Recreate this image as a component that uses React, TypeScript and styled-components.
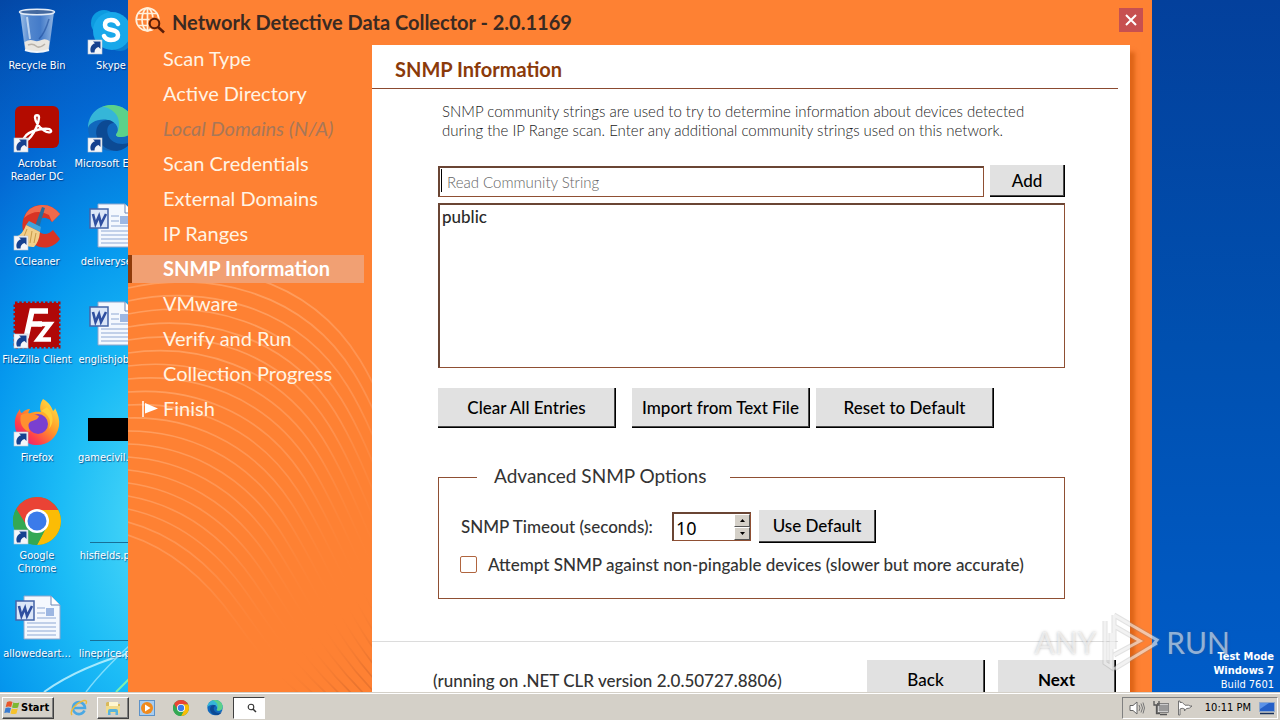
import React from "react";
import styled, { createGlobalStyle, css } from "styled-components";

const GlobalStyle = createGlobalStyle`
  *, *::before, *::after { box-sizing: border-box; }
  html, body { margin: 0; padding: 0; }
  body { font-family: Lato, "Liberation Sans", sans-serif; }
  button, input, select { font-family: inherit; }
`;

const tahoma = `"DejaVu Sans Condensed", "DejaVu Sans", sans-serif`;

const Screen = styled.div`
  display: flex;
  flex-direction: column;
  height: 100vh;
  overflow: hidden;
`;

const Desktop = styled.main`
  position: relative;
  flex: 1;
  min-height: 0;
  overflow: hidden;
  background:
    radial-gradient(ellipse 33% 90% at 14% 76%, #58e0f8 0%, #1cbcf6 28%, #0598ee 48%, rgba(3, 108, 216, 0.9) 70%, rgba(3, 80, 180, 0) 100%),
    linear-gradient(#03409c 0%, #0050b0 50%, #005cc8 100%);
`;

const Rays = styled.svg`
  position: absolute;
  left: 0;
  bottom: 0;
`;

const IconGrid = styled.div`
  position: absolute;
  top: 0;
  left: 0;
  display: grid;
  grid-template-rows: repeat(7, 98px);
  grid-auto-flow: column;
  grid-auto-columns: 74px;
`;

const Shortcut = styled.a`
  display: flex;
  flex-direction: column;
  align-items: center;
  gap: 4px;
  padding-top: 7px;
  color: #fff;
  font: 11px/13px ${tahoma};
  text-align: center;
  text-decoration: none;
  text-shadow: 1px 1px 1px rgba(0, 20, 80, 0.6);
`;

const ShortcutLabel = styled.span<{ $wrap?: boolean }>`
  width: 72px;
  display: flex;
  justify-content: center;
  white-space: ${(p) => (p.$wrap ? "pre-line" : "nowrap")};
`;

const BuildInfo = styled.div`
  position: absolute;
  right: 6px;
  bottom: 0;
  color: #fff;
  font: 11px/14px ${tahoma};
  text-align: right;
`;

const BuildLine = styled.div<{ $bold?: boolean }>`
  font-weight: ${(p) => (p.$bold ? 700 : 400)};
`;

const Watermark = styled.div`
  position: absolute;
  right: 50px;
  bottom: 19px;
  display: flex;
  align-items: center;
  gap: 5px;
  color: rgba(255, 255, 255, 0.55);
  font: 30px/60px Lato, sans-serif;
  text-shadow: 0 0 3px rgba(90, 90, 90, 0.4);
  pointer-events: none;
`;

const Window = styled.section`
  position: absolute;
  top: 0;
  bottom: 0;
  left: 10%;
  right: 10%;
  display: flex;
  flex-direction: column;
  background: #fe8133;
`;

const TitleBar = styled.header`
  display: flex;
  align-items: center;
  gap: 7px;
  height: 45px;
  padding: 0 9px 5px 7px;
`;

const Title = styled.h1`
  flex: 1;
  margin: 0;
  padding-top: 3px;
  color: #3a2a22;
  font-size: 20px;
  line-height: 24px;
`;

const CloseButton = styled.button`
  display: flex;
  align-items: center;
  justify-content: center;
  width: 24px;
  height: 24px;
  padding: 0;
  border: 0;
  background: #c75050;
`;

const WindowBody = styled.div`
  display: grid;
  grid-template-columns: 244px 1fr;
  flex: 1;
  min-height: 0;
  padding-right: 22px;
`;

const Nav = styled.nav`
  position: relative;
  display: flex;
  flex-direction: column;
  gap: 7px;
  padding-right: 8px;
`;

const Arcs = styled.svg`
  position: absolute;
  left: 0;
  top: 205px;
  pointer-events: none;
`;

const Step = styled.a<{ $state?: "active" | "disabled" }>`
  position: relative;
  display: flex;
  align-items: center;
  height: 28px;
  padding: 0 0 2px 31px;
  border-left: 4px solid transparent;
  color: #fff4e4;
  font-size: 20px;
  line-height: 26px;
  text-decoration: none;
  white-space: nowrap;
  ${(p) =>
    p.$state === "active" &&
    css`
      border-left-color: #8f3b0a;
      background: #f1a073;
      color: #fff;
      font-weight: 700;
    `}
  ${(p) =>
    p.$state === "disabled" &&
    css`
      color: #a87758;
      font-style: italic;
    `}
`;

const Flag = styled.svg`
  position: absolute;
  left: 10px;
  top: 6px;
`;

const Panel = styled.div`
  display: flex;
  flex-direction: column;
  min-height: 0;
  background: #fff;
  box-shadow: 6px 6px 4px -1px rgba(196, 76, 0, 0.55);
`;

const PanelTitle = styled.h2`
  height: 44px;
  margin: 0 12px 0 0;
  padding: 12px 0 0 23px;
  border-bottom: 1px solid #8b4a30;
  color: #8b3a0a;
  font-size: 20px;
  line-height: 24px;
`;

const PanelContent = styled.div`
  flex: 1;
  min-height: 0;
  padding: 13px 65px 0 66px;
`;

const Description = styled.p`
  margin: 0 0 25px;
  padding-left: 4px;
  color: #222;
  font-size: 15px;
  font-weight: 300;
  line-height: 19px;
`;

const AddRow = styled.form`
  display: flex;
  gap: 6px;
  height: 32px;
  margin-bottom: 6px;
`;

const fieldBorder = css`
  border: 1px solid #8f4f33;
  border-top: 2px solid #6a4534;
  border-left: 2px solid #6a4534;
  border-radius: 0;
  background: #fff;
  outline: none;
`;

const CommunityInput = styled.input`
  ${fieldBorder}
  flex: 1;
  min-width: 0;
  margin-top: 1px;
  padding: 0 7px;
  font-size: 15px;
  font-weight: 300;
  &::placeholder { color: #666; opacity: 1; }
`;

const InputWrap = styled.div`
  position: relative;
  display: flex;
  flex: 1;
`;

const Caret = styled.span`
  position: absolute;
  left: 3px;
  top: 4px;
  width: 1px;
  height: 23px;
  background: #000;
`;

const ListBox = styled.select`
  ${fieldBorder}
  display: block;
  width: 100%;
  height: 165px;
  padding: 0;
  color: #2a2a2a;
  font-size: 17px;
  overflow: hidden;
`;

const ListOption = styled.option`
  min-height: 24px;
  padding: 1px 2px;
  font-size: 17px;
  font-weight: 500;
  line-height: 20px;
`;

const Button = styled.button<{ $width: number; $height: number; $bold?: boolean }>`
  flex: none;
  width: ${(p) => p.$width}px;
  height: ${(p) => p.$height}px;
  padding: 0;
  border: 0 solid #000;
  border-width: 0 1px 1px 0;
  box-shadow: inset -1px -1px 0 #4a4a4a;
  background: #e1e1e1;
  color: #000;
  font-size: 17px;
  font-weight: ${(p) => (p.$bold ? 700 : 500)};
  line-height: 20px;
  white-space: nowrap;
`;

const ButtonRow = styled.div`
  display: flex;
  gap: 6px;
  margin: 20px 0 37px;
  & > :first-child { margin-right: 10px; }
`;

const Options = styled.fieldset`
  margin: 0;
  padding: 21px 21px 23px;
  border: 1px solid #8f4f33;
`;

const Legend = styled.legend`
  margin-left: 17px;
  padding: 0 24px 2px 17px;
  color: #333;
  font-size: 19px;
  line-height: 22px;
`;

const OptionRow = styled.div`
  display: flex;
  align-items: center;
  gap: 8px;
  height: 33px;
  margin-bottom: 11px;
  color: #333;
  font-size: 17px;
  font-weight: 500;
`;

const TimeoutLabel = styled.label`
  width: 204px;
  padding-left: 1px;
  white-space: nowrap;
`;

const Spinner = styled.div`
  ${fieldBorder}
  display: flex;
  width: 79px;
  height: 29px;
`;

const SpinnerInput = styled.input`
  flex: 1;
  min-width: 0;
  padding: 2px 0 0 2px;
  border: 0;
  outline: none;
  background: transparent;
  font: 18px/22px ${`"Noto Sans", sans-serif`};
  appearance: textfield;
  &::-webkit-inner-spin-button { display: none; }
`;

const SpinnerButtons = styled.div`
  display: flex;
  flex-direction: column;
  width: 16px;
`;

const SpinnerButton = styled.button`
  display: flex;
  align-items: center;
  justify-content: center;
  flex: 1;
  padding: 0;
  border: 1px solid;
  border-color: #fff #555 #555 #fff;
  background: #d4d0c8;
`;

const CheckLabel = styled.label`
  display: flex;
  align-items: center;
  gap: 11px;
  height: 20px;
  margin-bottom: 1px;
  color: #333;
  font-size: 17px;
  font-weight: 500;
  white-space: nowrap;
`;

const CheckBox = styled.input.attrs({ type: "checkbox" })`
  appearance: none;
  width: 17px;
  height: 17px;
  margin: 0;
  border: 1px solid #b0653f;
  border-radius: 2px;
  background: #fff;
`;

const PanelFooter = styled.footer`
  display: flex;
  align-items: flex-start;
  gap: 13px;
  height: 51px;
  margin-right: 12px;
  padding: 18px 2px 0 61px;
  border-top: 1px solid #dcdcdc;
  overflow: hidden;
`;

const RuntimeNote = styled.span`
  flex: 1;
  color: #333;
  font-size: 17px;
  font-weight: 500;
  line-height: 42px;
  white-space: nowrap;
`;

const Taskbar = styled.footer`
  display: flex;
  align-items: center;
  height: 28px;
  padding: 2px 2px 0;
  border-top: 1px solid #d4d0c8;
  box-shadow: inset 0 1px 0 #fff;
  background: #d4d0c8;
`;

const StartButton = styled.button`
  display: flex;
  align-items: center;
  gap: 1px;
  width: 52px;
  height: 22px;
  margin-right: 9px;
  padding: 0 0 0 1px;
  border: 1px solid;
  border-color: #fff #404040 #404040 #fff;
  box-shadow: inset -1px -1px 0 #808080;
  background: #d4d0c8;
  font: bold 11px/16px ${tahoma};
`;

const TaskButton = styled.button<{ $look?: "raised" | "pressed" }>`
  display: flex;
  align-items: center;
  justify-content: center;
  width: 32px;
  height: 22px;
  margin-right: 2px;
  padding: 0;
  border: 1px solid transparent;
  background: transparent;
  ${(p) =>
    p.$look === "raised" &&
    css`
      border-color: #fff #404040 #404040 #fff;
      box-shadow: inset -1px -1px 0 #808080;
    `}
  ${(p) =>
    p.$look === "pressed" &&
    css`
      padding-left: 6px;
      border-color: #404040 #fff #fff #404040;
      background: #fff;
    `}
`;

const Tray = styled.div`
  display: flex;
  align-items: center;
  gap: 8px;
  height: 22px;
  margin-left: auto;
  padding: 0 2px 0 6px;
  border: 1px solid;
  border-color: #808080 #fff #fff #808080;
`;

const Clock = styled.time`
  margin-left: 4px;
  font: 11px/14px ${tahoma};
`;

/* ---------- drawings ---------- */

const ShortcutArrow = () => (
  <g>
    <rect x="1" y="33" width="14" height="14" fill="#f4f6fa" stroke="#c0c8d4" strokeWidth="0.6" />
    <path d="M4 45.500c-1.500-4 0-8 4-9.300L6 34.500h7.500v7.500l-2-2c-2.600 .8-4 2.800-4 5.500z" fill="#16418f" />
  </g>
);

const Glyph = ({ children }: { children: React.ReactNode }) => (
  <svg width="48" height="48" viewBox="0 0 48 48" aria-hidden="true">{children}</svg>
);

const RecycleBin = () => (
  <Glyph>
    <defs>
      <linearGradient id="glass" x1="0" x2="1" y1="0" y2="0">
        <stop offset="0" stopColor="#b9d4f2" />
        <stop offset=".3" stopColor="#5f8fd2" />
        <stop offset=".6" stopColor="#4f82cc" />
        <stop offset="1" stopColor="#a9c6ea" />
      </linearGradient>
    </defs>
    <path d="M7 5l5 38q12 4 24 0l5-38z" fill="url(#glass)" opacity=".85" />
    <path d="M11.500 35q5-3 9-1.500t8-.5 8 1l-1 9q-11 4-23 0z" fill="#e9e6e0" />
    <path d="M15 38q5-2 8 1t9-2" fill="none" stroke="#b9b3aa" strokeWidth="1.500" />
    <path d="M12 43q12 4 24 0" fill="none" stroke="#f2f6fb" strokeWidth="2" />
    <ellipse cx="24" cy="5" rx="17.500" ry="2.800" fill="#44699f" stroke="#e3ecf7" strokeWidth="1.500" />
    <path d="M14 10l3 22" stroke="#e3effb" strokeWidth="2" opacity=".7" />
    <path d="M36 12q-4 14-10 20" stroke="#1f4f9c" strokeWidth="1.500" fill="none" opacity=".6" />
  </Glyph>
);

const Skype = () => (
  <Glyph>
    <circle cx="17" cy="16" r="13" fill="#0d9be0" />
    <circle cx="33" cy="32" r="12" fill="#0b7fd0" />
    <circle cx="25" cy="24" r="19" fill="#18a8ea" />
    <path d="M31 17q-2-4-7-4-6 0-6 5 0 4 7 5 6 1 6 5 0 5-7 5-5 0-7-4" fill="none" stroke="#fff" strokeWidth="4.500" strokeLinecap="round" />
    <ShortcutArrow />
  </Glyph>
);

const Acrobat = () => (
  <Glyph>
    <rect x="2" y="1" width="44" height="42" rx="6" fill="#b30b00" />
    <path d="M11 33c2-4 8-7 15-8.500 5-1 11-1 12 1s-3 3-7 0c-5-3-9-9-9-13 0-3 4-3 4 0 0 5-4 14-8 19-3 4-6 5-7 1.500z" fill="none" stroke="#fff" strokeWidth="2.400" />
    <ShortcutArrow />
  </Glyph>
);

const EdgeArt = () => (
  <g>
    <circle cx="24" cy="23" r="23" fill="#1168bd" />
    <path d="M1 23C1 9 12 0 24 0c14 0 23 10 23 20 0 8-6 12-13 12-5 0-6-2-4-4 2-3 1-11-9-13C11 13 2 18 1 23z" fill="#35b6d8" />
    <path d="M24 0c14 0 23 10 23 20 0 8-6 12-13 12-5 0-6-2-4-4 2-3 4-14-2-20-4-4-10-7-14-6 3-1 6-2 10-2z" fill="#62d67c" opacity=".85" />
    <path d="M21 15c-9 0-14 9-11 17 3 9 12 14 20 14 6-1 11-4 14-9-8 4-20 2-23-7-2-6 0-12 6-12-2-2-4-3-6-3z" fill="#0c4a94" />
  </g>
);

const Edge = () => (
  <Glyph>
    <EdgeArt />
    <ShortcutArrow />
  </Glyph>
);

const CCleaner = () => (
  <Glyph>
    <path d="M47 11Q39 1 28 2 14 3 10 17q-3 15 9 23 8 6 17 4 7-2 11-8l-7-9q-6 6-12 3-6-4-4-10 3-6 9-5 4 1 6 4z" fill="#d83424" />
    <path d="M47 11Q39 1 28 2 15 3 11 15q12-10 25-3l3 7z" fill="#f06a4c" />
    <path d="M29 4l3 1-6 20-4-2z" fill="#2b6c9c" />
    <path d="M16 18l12 6-1 5-14-7z" fill="#3fa4dc" />
    <path d="M13 22l14 7q-1 10-6 15-8 1-18-10 7-3 10-12z" fill="#f2cf8a" />
    <path d="M14 26l-4 10M19 28l-2 12M23 30l-2 10" stroke="#c99a4a" strokeWidth="1" />
    <ShortcutArrow />
  </Glyph>
);

const FileZilla = () => (
  <Glyph>
    <rect x="2" y="2" width="44" height="44" fill="#b00808" stroke="#b00808" strokeWidth="3" strokeDasharray="2.500 1.800" />
    <path d="M35 10H19l-6 27M15 23h14" fill="none" stroke="#fff" strokeWidth="5.500" />
    <path d="M25 23h12L25 38.500h13" fill="none" stroke="#fff" strokeWidth="4.500" />
    <ShortcutArrow />
  </Glyph>
);

const Firefox = () => (
  <Glyph>
    <defs>
      <linearGradient id="fx" x1="1" y1="0" x2="0.100" y2="1">
        <stop offset="0" stopColor="#fff04a" />
        <stop offset=".45" stopColor="#ff9a28" />
        <stop offset=".75" stopColor="#ff3f4c" />
        <stop offset="1" stopColor="#d8158c" />
      </linearGradient>
    </defs>
    <path d="M30 0c7 4 9 9 10 12 2-1 2-3 2-3 3 6 5 12 4 18-2 12-11 19-22 19S3 38 2 27C1 18 5 13 7 10c0 3 1 4 2 4 3-3 5-4 8-4-2 3-2 4-1 5 5-3 10-2 12-2-2-5 0-10 2-13z" fill="url(#fx)" />
    <circle cx="25" cy="25" r="10" fill="#7a3fd0" />
    <path d="M8 16c5-3 12-2 18 1-1 4-5 4-9 6-3 3-1 6 0 10C9 31 6 23 8 16z" fill="#ff9030" />
    <path d="M28 12c8 3 11 10 8 18 6-7 4-16-2-22z" fill="#ffd03a" />
    <ShortcutArrow />
  </Glyph>
);

const ChromeArt = () => (
  <g>
    <circle cx="24" cy="24" r="24" fill="#34a853" />
    <path d="M24 13h21.300A24 24 0 0 1 24 48l9.500-18z" fill="#fbbc05" />
    <path d="M3.200 12l11.200 18L24 13h21.300A24 24 0 0 0 3.200 12z" fill="#ea4335" />
    <path d="M3.200 12A24 24 0 0 0 24 48l9.500-18-9.500 5-9.600-5z" fill="#34a853" />
    <circle cx="24" cy="24" r="12" fill="#fff" />
    <circle cx="24" cy="24" r="9.500" fill="#3b7bea" />
  </g>
);

const Chrome = () => (
  <Glyph>
    <ChromeArt />
    <ShortcutArrow />
  </Glyph>
);

const WordDocument = () => (
  <Glyph>
    <path d="M11 1h27l9 9v34H11z" fill="#f4f8fe" stroke="#8fa6cc" />
    <path d="M38 1v9h9" fill="#fff" stroke="#6c86b4" />
    <path d="M24 13h8M24 18h8M24 23h19M14 28h29M14 32h29M14 36h29M14 40h29" stroke="#8ea8d4" strokeWidth="1.200" />
    <rect x="33" y="13" width="8" height="8" fill="#9db7e2" />
    <rect x="3" y="6" width="18" height="19" fill="#dbe6f8" stroke="#4464a8" strokeWidth="1.500" />
    <path d="M6 11l2.500 10 3.500-8 2 8 5-10" fill="none" stroke="#2f4fa0" strokeWidth="2.600" />
  </Glyph>
);

const BlackImage = () => (
  <Glyph>
    <rect x="1" y="19" width="47" height="23" fill="#000" />
  </Glyph>
);

const ThinImage = () => (
  <Glyph>
    <path d="M3 45.500h45" stroke="#186f96" strokeWidth="1" />
  </Glyph>
);

const GlobeSearch = () => (
  <svg width="30" height="27" viewBox="0 0 30 27" aria-hidden="true">
    <g fill="none" stroke="#fff0dc" strokeWidth="1.700">
      <circle cx="12.500" cy="12.500" r="11.300" />
      <ellipse cx="12.500" cy="12.500" rx="5.500" ry="11.300" />
      <path d="M12.500 1v23M1 12.500h23M3 6.500h19M3 18.500h19" />
    </g>
    <circle cx="19.500" cy="16.500" r="6.500" fill="#fe8133" />
    <circle cx="19.500" cy="16.500" r="4.800" fill="none" stroke="#5a1d08" strokeWidth="2" />
    <path d="M23 20l6 5.500" stroke="#5a1d08" strokeWidth="2.600" />
  </svg>
);

type Pt = [number, number];
const outerArc: Pt[] = [[0, 25], [80, 5], [180, 25], [232, 110], [284, 195], [300, 330], [400, 440]];
const innerArc: Pt[] = [[0, 285], [40, 298], [75, 325], [107, 370], [139, 415], [160, 440], [220, 480]];
const ARC_COUNT = 21;

const arcPath = (i: number) => {
  const t = i / (ARC_COUNT - 1);
  const p = outerArc.map(([x, y], k) =>
    `${Math.round((x + (innerArc[k][0] - x) * t) * 10) / 10} ${Math.round((y + (innerArc[k][1] - y) * t) * 10) / 10}`
  );
  return `M${p[0]}C${p[1]} ${p[2]} ${p[3]}C${p[4]} ${p[5]} ${p[6]}`;
};

const ArcPattern = () => (
  <Arcs width="244" height="442" viewBox="0 0 244 442" aria-hidden="true">
    <defs>
      <linearGradient id="arcFade" gradientUnits="userSpaceOnUse" x1="0" y1="200" x2="230" y2="430">
        <stop offset="0" stopColor="#ffa468" stopOpacity=".8" />
        <stop offset=".4" stopColor="#ff9c60" stopOpacity=".6" />
        <stop offset=".8" stopColor="#fe8133" stopOpacity="0" />
        <stop offset="1" stopColor="#dc6c2c" stopOpacity=".6" />
      </linearGradient>
    </defs>
    {Array.from({ length: ARC_COUNT }, (_, i) => (
      <path key={i} d={arcPath(i)} fill="none" stroke="url(#arcFade)" strokeWidth="1.700" />
    ))}
  </Arcs>
);

const WindowsFlag = () => (
  <svg width="16" height="16" viewBox="0 0 16 16" aria-hidden="true">
    <path d="M3 2q3-1.500 5.500 0L7.200 7Q4.500 5.800 1.700 7z" fill="#e8562a" />
    <path d="M9.300 2.400q3 1.200 6 0L14 7.400q-3 1.200-6 0z" fill="#7db832" />
    <path d="M1.500 8Q4 6.800 7 8l-1.300 5Q3 11.800.3 13z" fill="#3a7cd0" />
    <path d="M7.800 8.400q3 1.200 6 0l-1.300 5q-3 1.200-6 0z" fill="#f6c22c" />
  </svg>
);

const InternetExplorer = () => (
  <svg width="18" height="18" viewBox="0 0 18 18" aria-hidden="true">
    <path d="M14.500 11.500A6 6 0 1 1 15 9H4" fill="none" stroke="#4aa8e4" strokeWidth="2.600" />
    <path d="M2 16C-1 12 6 4 13 1.800c4-1 4 1.200 2.800 3.200" fill="none" stroke="#eebb3a" strokeWidth="1.400" />
  </svg>
);

const Explorer = () => (
  <svg width="18" height="16" viewBox="0 0 18 16" aria-hidden="true">
    <path d="M2 3l1-1h5l1 2h7v9H2z" fill="#d9b95c" />
    <path d="M5 2h9v5H5z" fill="#fff7d0" />
    <path d="M2 6h14v7H2z" fill="#f2dc8c" />
    <path d="M4 15v-4q0-2 2-2h6q2 0 2 2v4h-2.500v-3h-5v3z" fill="#58b4dc" />
  </svg>
);

const MediaPlayer = () => (
  <svg width="16" height="16" viewBox="0 0 16 16" aria-hidden="true">
    <rect x=".5" y=".5" width="15" height="15" fill="#a8cdf0" stroke="#5c92c8" />
    <circle cx="8" cy="8" r="6" fill="#f08a1c" />
    <path d="M6 4.500L11.500 8 6 11.500z" fill="#fff" />
  </svg>
);

const SmallSearch = () => (
  <svg width="10" height="10" viewBox="0 0 10 10" aria-hidden="true">
    <circle cx="4" cy="4" r="2.800" fill="none" stroke="#333" strokeWidth="1.100" />
    <path d="M6 6l3 3" stroke="#333" strokeWidth="1.500" />
  </svg>
);

const Volume = () => (
  <svg width="16" height="16" viewBox="0 0 16 16" aria-hidden="true">
    <path d="M1 5.500h3L8 2v12L4 10.500H1z" fill="#fff" stroke="#666" />
    <path d="M10 5q2 3 0 6M12 3.500q3 4.500 0 9M14 2.500q3 5.500 0 11" fill="none" stroke="#777" />
  </svg>
);

const Network = () => (
  <svg width="16" height="16" viewBox="0 0 16 16" aria-hidden="true">
    <rect x="5" y="4" width="10.500" height="8" fill="#999" stroke="#fff" />
    <rect x="4.500" y="3.500" width="11" height="9" fill="none" stroke="#555" strokeWidth=".7" />
    <path d="M7 14.500h7" stroke="#555" strokeWidth="1.500" />
    <path d="M1 1v4h5V1M3.500 5v8.500H7" fill="none" stroke="#555" strokeWidth="1.300" />
  </svg>
);

const TrayFlag = () => (
  <svg width="16" height="16" viewBox="0 0 16 16" aria-hidden="true">
    <path d="M1.500 1v14h1.500V9q2-1.500 4.500 0v2l2-2.500q3 .5 5.500-2.500-2 .5-3.500-.8H8Q5 1 3 2.500V1z" fill="#fff" stroke="#666" strokeWidth=".9" />
  </svg>
);

const DesktopPeek = () => (
  <svg width="16" height="14" viewBox="0 0 16 14" aria-hidden="true">
    <path d="M.5 1.500h15v9H.5z" fill="#2460c8" stroke="#8fa8cc" />
    <path d="M1 2h9L1 8z" fill="#5a92e8" />
    <path d="M1 12.500h14" stroke="#16305c" strokeWidth="1.500" />
  </svg>
);

/* ---------- data ---------- */

const shortcuts: { label: string; icon: React.ReactNode; wrap?: boolean }[] = [
  { label: "Recycle Bin", icon: <RecycleBin /> },
  { label: "Acrobat\nReader DC", icon: <Acrobat />, wrap: true },
  { label: "CCleaner", icon: <CCleaner /> },
  { label: "FileZilla Client", icon: <FileZilla /> },
  { label: "Firefox", icon: <Firefox /> },
  { label: "Google\nChrome", icon: <Chrome />, wrap: true },
  { label: "allowedeart...", icon: <WordDocument /> },
  { label: "Skype", icon: <Skype /> },
  { label: "Microsoft Edge", icon: <Edge /> },
  { label: "deliveryse...", icon: <WordDocument /> },
  { label: "englishjobs...", icon: <WordDocument /> },
  { label: "gamecivil.jpg", icon: <BlackImage /> },
  { label: "hisfields.png", icon: <ThinImage /> },
  { label: "lineprice.png", icon: <ThinImage /> },
];

const steps: { label: string; state?: "active" | "disabled"; flag?: boolean }[] = [
  { label: "Scan Type" },
  { label: "Active Directory" },
  { label: "Local Domains (N/A)", state: "disabled" },
  { label: "Scan Credentials" },
  { label: "External Domains" },
  { label: "IP Ranges" },
  { label: "SNMP Information", state: "active" },
  { label: "VMware" },
  { label: "Verify and Run" },
  { label: "Collection Progress" },
  { label: "Finish", flag: true },
];

export default function App() {
  return (
    <Screen>
      <GlobalStyle />
      <Desktop>
        <Rays width="160" height="60" viewBox="0 0 160 60" aria-hidden="true">
          <path d="M44 60Q80 34 140 18" fill="none" stroke="#c8f6ff" strokeWidth="2" opacity=".8" />
          <path d="M86 60Q104 36 140 4" fill="none" stroke="#a8ecff" strokeWidth="1.500" opacity=".7" />
          <path d="M116 60l20-20" stroke="#7df0b0" strokeWidth="2" />
        </Rays>
        <IconGrid>
          {shortcuts.map((s) => (
            <Shortcut href="#" key={s.label}>
              {s.icon}
              <ShortcutLabel $wrap={s.wrap}>{s.label}</ShortcutLabel>
            </Shortcut>
          ))}
        </IconGrid>

        <Window>
          <TitleBar>
            <GlobeSearch />
            <Title>Network Detective Data Collector - 2.0.1169</Title>
            <CloseButton aria-label="Close">
              <svg width="14" height="14" viewBox="0 0 14 14" aria-hidden="true">
                <path d="M2 2l10 10M12 2L2 12" stroke="#fff" strokeWidth="2" />
              </svg>
            </CloseButton>
          </TitleBar>
          <WindowBody>
            <Nav>
              <ArcPattern />
              {steps.map((s) => (
                <Step href="#" key={s.label} $state={s.state}>
                  {s.flag && (
                    <Flag width="18" height="16" viewBox="0 0 18 16" aria-hidden="true">
                      <path d="M1 0v16" stroke="#fff" strokeWidth="1.500" />
                      <path d="M3 2l13 5.500L3 12.500z" fill="#fff" />
                    </Flag>
                  )}
                  {s.label}
                </Step>
              ))}
            </Nav>
            <Panel>
              <PanelTitle>SNMP Information</PanelTitle>
              <PanelContent>
                <Description>
                  SNMP community strings are used to try to determine information about devices detected
                  <br />
                  during the IP Range scan. Enter any additional community strings used on this network.
                </Description>
                <AddRow onSubmit={(e) => e.preventDefault()}>
                  <InputWrap>
                    <CommunityInput aria-label="Read Community String" placeholder="Read Community String" />
                    <Caret />
                  </InputWrap>
                  <Button $width={75} $height={32}>Add</Button>
                </AddRow>
                <ListBox multiple size={6} aria-label="Community strings">
                  <ListOption>public</ListOption>
                </ListBox>
                <ButtonRow>
                  <Button $width={178} $height={40}>Clear All Entries</Button>
                  <Button $width={178} $height={40}>Import from Text File</Button>
                  <Button $width={178} $height={40}>Reset to Default</Button>
                </ButtonRow>
                <Options>
                  <Legend>Advanced SNMP Options</Legend>
                  <OptionRow>
                    <TimeoutLabel htmlFor="timeout">SNMP Timeout (seconds):</TimeoutLabel>
                    <Spinner>
                      <SpinnerInput id="timeout" type="number" defaultValue={10} />
                      <SpinnerButtons>
                        <SpinnerButton aria-label="Increase">
                          <svg width="5" height="3" viewBox="0 0 5 3"><path d="M0 3h5L2.500 0z" /></svg>
                        </SpinnerButton>
                        <SpinnerButton aria-label="Decrease">
                          <svg width="5" height="3" viewBox="0 0 5 3"><path d="M0 0h5L2.500 3z" /></svg>
                        </SpinnerButton>
                      </SpinnerButtons>
                    </Spinner>
                    <Button $width={117} $height={33}>Use Default</Button>
                  </OptionRow>
                  <CheckLabel>
                    <CheckBox />
                    Attempt SNMP against non-pingable devices (slower but more accurate)
                  </CheckLabel>
                </Options>
              </PanelContent>
              <PanelFooter>
                <RuntimeNote>(running on .NET CLR version 2.0.50727.8806)</RuntimeNote>
                <Button $width={118} $height={40}>Back</Button>
                <Button $width={118} $height={40} $bold>Next</Button>
              </PanelFooter>
            </Panel>
          </WindowBody>
        </Window>

        <BuildInfo>
          <BuildLine $bold>Test Mode</BuildLine>
          <BuildLine $bold>Windows 7</BuildLine>
          <BuildLine>Build 7601</BuildLine>
        </BuildInfo>
        <Watermark>
          ANY
          <svg width="60" height="62" viewBox="0 0 60 62" aria-hidden="true">
            <g fill="none" stroke="#8a8a8a" strokeOpacity=".25" strokeWidth="5">
              <path d="M13 4l43 25-4 5M13 58l43-26M13 4v34M4 10v42l6 4v-34M13 44l26-14-26-15" />
            </g>
            <g fill="none" stroke="#fff" strokeOpacity=".55" strokeWidth="3">
              <path d="M13 4l43 25-4 5M13 58l43-26M13 4v34M4 10v42l6 4v-34M13 44l26-14-26-15" />
            </g>
          </svg>
          RUN
        </Watermark>
      </Desktop>

      <Taskbar>
        <StartButton>
          <WindowsFlag />
          Start
        </StartButton>
        <TaskButton aria-label="Internet Explorer"><InternetExplorer /></TaskButton>
        <TaskButton aria-label="File Explorer" $look="raised"><Explorer /></TaskButton>
        <TaskButton aria-label="Media Player"><MediaPlayer /></TaskButton>
        <TaskButton aria-label="Chrome">
          <svg width="16" height="16" viewBox="0 0 48 48" aria-hidden="true"><ChromeArt /></svg>
        </TaskButton>
        <TaskButton aria-label="Edge">
          <svg width="16" height="16" viewBox="0 0 48 48" aria-hidden="true"><EdgeArt /></svg>
        </TaskButton>
        <TaskButton aria-label="Data Collector" $look="pressed"><SmallSearch /></TaskButton>
        <Tray>
          <Volume />
          <Network />
          <TrayFlag />
          <Clock>10:11 PM</Clock>
          <DesktopPeek />
        </Tray>
      </Taskbar>
    </Screen>
  );
}
